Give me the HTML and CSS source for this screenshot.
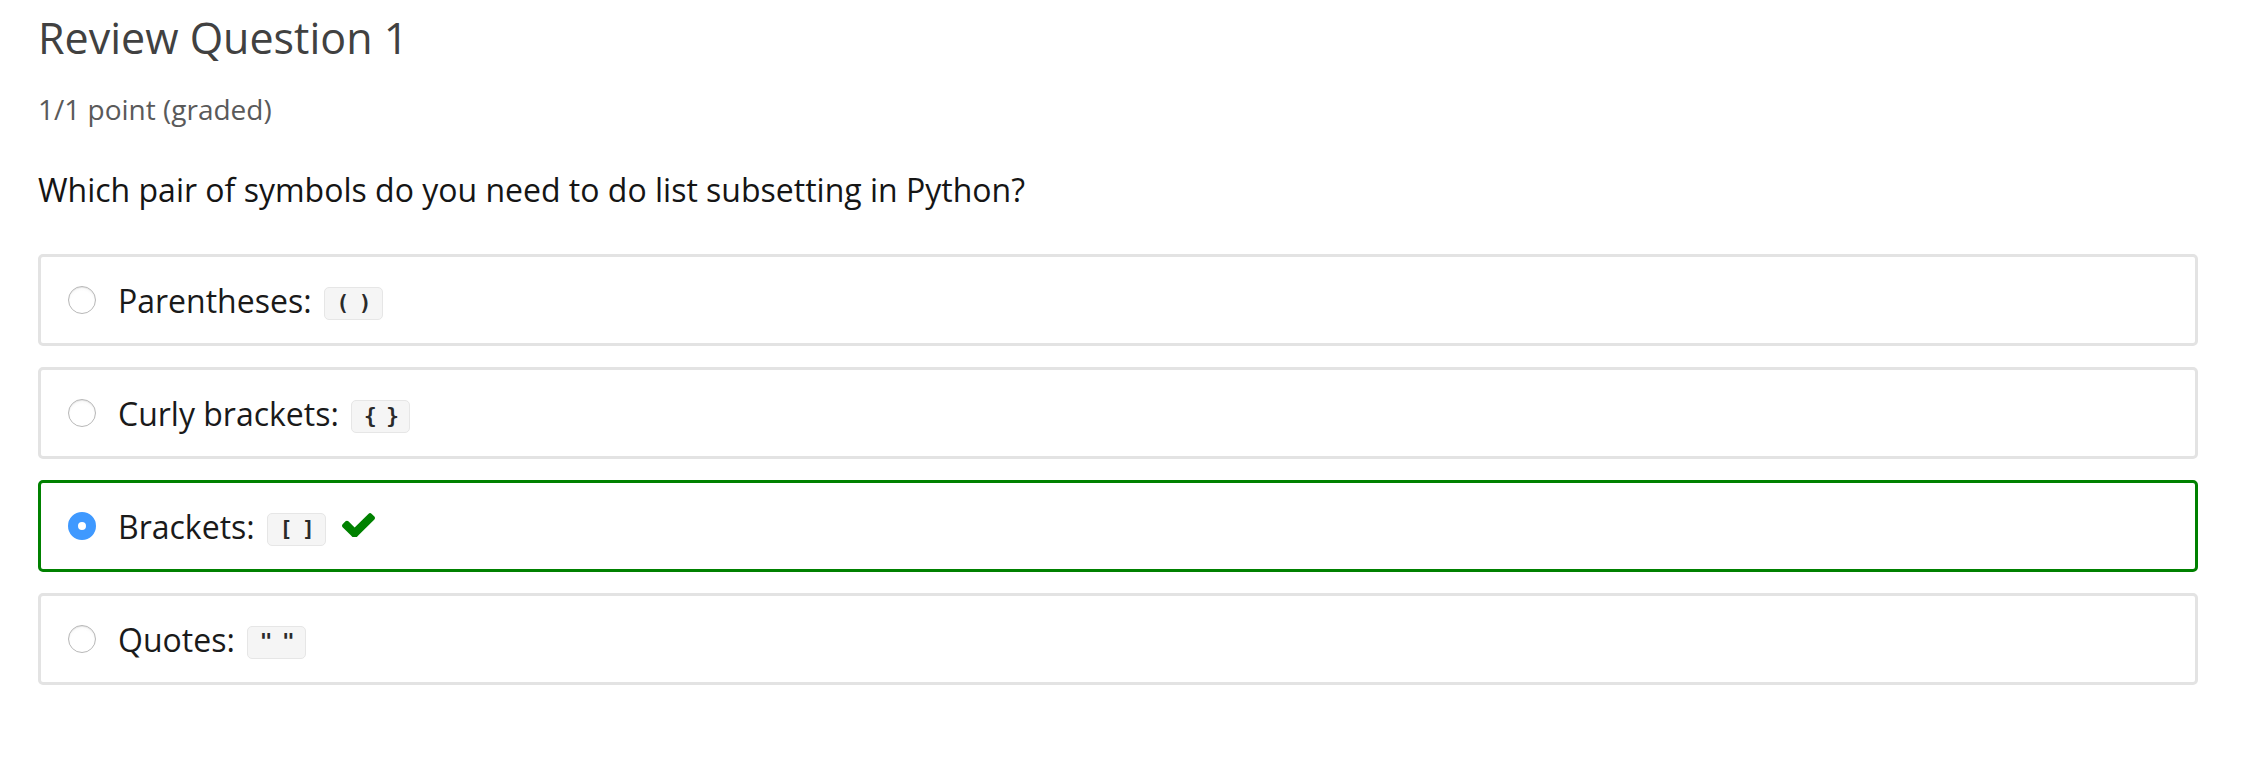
FILE: index.html
```html
<!DOCTYPE html>
<html>
<head>
<meta charset="utf-8">
<link rel="stylesheet" href="styles.css">
</head>
<body>
<div class="problem">
  <h2 class="title">Review Question 1</h2>
  <div class="points">1/1 point (graded)</div>
  <p class="question">Which pair of symbols do you need to do list subsetting in Python?</p>
  <div class="choices">
    <label class="choice">
      <span class="radio"></span>
      <span class="label">Parentheses:</span>
      <code class="chip">( )</code>
    </label>
    <label class="choice">
      <span class="radio"></span>
      <span class="label">Curly brackets:</span>
      <code class="chip">{ }</code>
    </label>
    <label class="choice correct">
      <span class="radio checked"></span>
      <span class="label">Brackets:</span>
      <code class="chip">[ ]</code>
      <svg class="check" viewBox="121 338 1550 1116" width="33" height="24"><path fill="#008100" d="M1671 566q0 40-28 68l-724 724-136 136q-28 28-68 28t-68-28l-136-136-362-362q-28-28-28-68t28-68l136-136q28-28 68-28t68 28l294 295 656-657q28-28 68-28t68 28l136 136q28 28 28 68z"/></svg>
    </label>
    <label class="choice">
      <span class="radio"></span>
      <span class="label">Quotes:</span>
      <code class="chip">" "</code>
    </label>
  </div>
</div>
</body>
</html>
```
FILE: styles.css
```css
html, body {
  margin: 0;
  padding: 0;
  background: #ffffff;
}
body {
  font-family: "Open Sans", "Liberation Sans", sans-serif;
  color: #1a1a1a;
}
.problem {
  padding: 0 60px 0 38px;
}
.title {
  margin: 0;
  padding-top: 8px;
  font-size: 43px;
  font-weight: 400;
  line-height: 60px;
  color: #414141;
}
.points {
  margin-top: 23px;
  font-size: 28px;
  line-height: 36px;
  color: #5a5a5a;
}
.question {
  margin: 41px 0 0 0;
  font-size: 32px;
  line-height: 44px;
  color: #151515;
}
.choices {
  margin-top: 42px;
  display: flex;
  flex-direction: column;
  gap: 21px;
}
.choice {
  display: flex;
  align-items: center;
  height: 86px;
  border: 3px solid #e3e3e3;
  border-radius: 5px;
  padding-left: 27px;
}
.choice.correct {
  border-color: #008100;
}
.radio {
  box-sizing: border-box;
  width: 28px;
  height: 28px;
  border-radius: 50%;
  border: 1.5px solid #b8b8b8;
  background: radial-gradient(circle at 50% 60%, #ffffff 55%, #f1f1f1 100%);
  box-shadow: inset 0 1px 1px rgba(0,0,0,0.08);
  margin-right: 22px;
  flex: none;
}
.radio.checked {
  border: 10px solid #3f99ff;
  background: #ffffff;
  box-shadow: none;
}
.label {
  font-size: 32px;
  color: #1a1a1a;
}
.chip {
  margin-left: 12px;
  margin-top: 6px;
  box-sizing: border-box;
  height: 33px;
  padding: 0 12px;
  display: inline-flex;
  align-items: center;
  background: #f5f5f5;
  border: 1.5px solid #e6e6e6;
  border-radius: 5px;
  font-family: "DejaVu Sans Mono", "Liberation Mono", monospace;
  font-size: 21px;
  font-weight: 700;
  letter-spacing: -1.5px;
  color: #2a2a2a;
  white-space: pre;
}
.check {
  margin-left: 16px;
  margin-top: -2px;
}
```
